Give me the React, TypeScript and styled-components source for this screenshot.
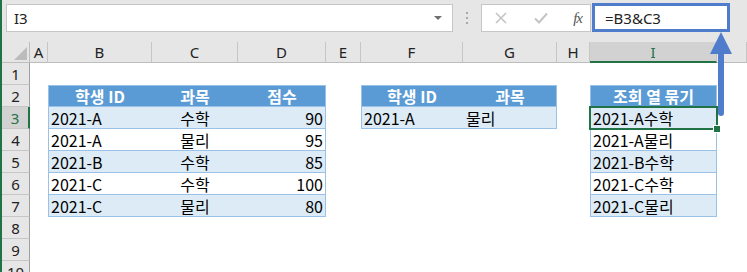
import React from 'react';
import styled, { createGlobalStyle } from 'styled-components';

const GlobalStyle = createGlobalStyle`
  html, body {
    margin: 0;
    padding: 0;
    background: #ffffff;
  }
  body {
    width: 747px;
    height: 272px;
    overflow: hidden;
  }
`;

const GREEN = '#217346';
const BLUE_LINE = '#9bc2e6';
const ACCENT = '#4f7ccb';
const UI_FONT = `"Noto Sans", "Open Sans", sans-serif`;
const CELL_FONT = `"Noto Sans CJK KR", "Noto Sans", sans-serif`;

const Window = styled.div`
  display: flex;
  flex-direction: column;
  width: 747px;
  height: 272px;
  border-left: 2px solid ${GREEN};
  box-sizing: border-box;
  position: relative;
  overflow: hidden;
  background: #ffffff;
`;

const TopBar = styled.div`
  display: flex;
  flex-shrink: 0;
  align-items: flex-start;
  height: 42px;
  padding: 4px 0 0 4px;
  box-sizing: border-box;
  background: #e6e6e6;
  font-family: ${UI_FONT};
`;

const NameBox = styled.div`
  position: relative;
  width: 447px;
  height: 28px;
  box-sizing: border-box;
  background: #ffffff;
  border: 1px solid #c6c6c6;
  display: flex;
  align-items: center;
  padding-left: 7px;
  font-size: 15px;
  color: #222;
`;

const DropArrow = styled.span`
  position: absolute;
  right: 10px;
  top: 11px;
  width: 0;
  height: 0;
  border-left: 4px solid transparent;
  border-right: 4px solid transparent;
  border-top: 4px solid #6f6f6f;
`;

const Grip = styled.div`
  width: 28px;
  height: 28px;
  display: flex;
  flex-direction: column;
  align-items: center;
  justify-content: center;
  gap: 3px;
`;

const GripDot = styled.span`
  width: 2px;
  height: 2px;
  background: #a8a8a8;
`;

const FxGroup = styled.div`
  width: 110px;
  height: 28px;
  box-sizing: border-box;
  background: #ffffff;
  border: 1px solid #c6c6c6;
  display: flex;
  align-items: center;
  justify-content: space-between;
  padding: 0 8px 0 12px;
  margin-right: 1px;
`;

const FxLabel = styled.span`
  font-family: "Liberation Serif", serif;
  font-style: italic;
  font-size: 15px;
  color: #555;
  letter-spacing: -1px;
`;

const FormulaBox = styled.div`
  width: 138px;
  height: 29px;
  margin-top: -1px;
  box-sizing: border-box;
  background: #ffffff;
  border: 3px solid ${ACCENT};
  display: flex;
  align-items: center;
  padding-left: 10px;
  font-size: 15px;
  color: #222;
`;

const Sheet = styled.div`
  display: grid;
  flex-shrink: 0;
  grid-template-columns: 28px 18px 104px 86px 88px 35px 102px 94px 33px 127px 1fr;
  grid-template-rows: 21px repeat(10, 22px);
`;

const Corner = styled.div`
  position: relative;
  background: #e6e6e6;
  border-right: 1px solid #bdbdbd;
  border-bottom: 1px solid #bdbdbd;
  box-sizing: border-box;
  &::after {
    content: '';
    position: absolute;
    right: 2px;
    bottom: 2px;
    width: 0;
    height: 0;
    border-left: 13px solid transparent;
    border-bottom: 13px solid #bcbcbc;
  }
`;

const ColHead = styled.div<{ $active?: boolean }>`
  display: flex;
  align-items: center;
  justify-content: center;
  box-sizing: border-box;
  font-family: ${UI_FONT};
  font-size: 15px;
  background: ${(p) => (p.$active ? '#d2d2d2' : '#e6e6e6')};
  color: ${(p) => (p.$active ? GREEN : '#222')};
  border-right: 1px solid #c6c6c6;
  border-bottom: ${(p) => (p.$active ? `2px solid ${GREEN}` : '1px solid #bdbdbd')};
`;

const RowHead = styled.div<{ $active?: boolean }>`
  display: flex;
  align-items: center;
  justify-content: center;
  box-sizing: border-box;
  font-family: ${UI_FONT};
  font-size: 15px;
  background: ${(p) => (p.$active ? '#d2d2d2' : '#e6e6e6')};
  color: ${(p) => (p.$active ? GREEN : '#222')};
  border-bottom: 1px solid #c6c6c6;
  border-right: ${(p) => (p.$active ? `2px solid ${GREEN}` : '1px solid #9f9f9f')};
`;

type Kind = 'empty' | 'head' | 'band' | 'plain';
type Align = 'left' | 'center' | 'right';

const Cell = styled.div<{ $kind: Kind; $align: Align; $first?: boolean; $last?: boolean }>`
  position: relative;
  display: flex;
  align-items: center;
  justify-content: ${(p) =>
    p.$align === 'left' ? 'flex-start' : p.$align === 'right' ? 'flex-end' : 'center'};
  padding: 0 3px 0 3px;
  box-sizing: border-box;
  font-family: ${CELL_FONT};
  font-size: 16px;
  white-space: nowrap;
  color: ${(p) => (p.$kind === 'head' ? '#ffffff' : '#000000')};
  font-weight: ${(p) => (p.$kind === 'head' ? 700 : 400)};
  background: ${(p) =>
    p.$kind === 'head' ? '#5b9bd5' : p.$kind === 'band' ? '#ddebf7' : '#ffffff'};
  box-shadow: ${(p) => {
    if (p.$kind === 'empty') return 'none';
    const s: string[] = [`inset 0 -1px 0 ${BLUE_LINE}`];
    if (p.$kind === 'head') s.push(`inset 0 1px 0 ${BLUE_LINE}`);
    if (p.$first) s.push(`inset 1px 0 0 ${BLUE_LINE}`);
    if (p.$last) s.push(`inset -1px 0 0 ${BLUE_LINE}`);
    return s.join(', ');
  }};
`;

const Selection = styled.div`
  position: absolute;
  z-index: 3;
  left: -1px;
  top: -1px;
  right: -1px;
  bottom: -1px;
  border: 2px solid ${GREEN};
  pointer-events: none;
`;

const FillHandle = styled.span`
  position: absolute;
  right: -5px;
  bottom: -5px;
  width: 6px;
  height: 6px;
  background: ${GREEN};
  border: 1px solid #ffffff;
`;

const ArrowOverlay = styled.svg`
  position: absolute;
  z-index: 4;
  left: 704px;
  top: 30px;
`;

const COLS = ['A', 'B', 'C', 'D', 'E', 'F', 'G', 'H', 'I', ''];

type CellDef = { text?: string; kind: Kind; align: Align; first?: boolean; last?: boolean };

const empty: CellDef = { kind: 'empty', align: 'left' };

const students = [
  ['2021-A', '수학', '90'],
  ['2021-A', '물리', '95'],
  ['2021-B', '수학', '85'],
  ['2021-C', '수학', '100'],
  ['2021-C', '물리', '80'],
];

const buildRow = (r: number): CellDef[] => {
  const row: CellDef[] = COLS.map(() => empty);
  if (r === 2) {
    row[1] = { text: '학생 ID', kind: 'head', align: 'center', first: true };
    row[2] = { text: '과목', kind: 'head', align: 'center' };
    row[3] = { text: '점수', kind: 'head', align: 'center', last: true };
    row[5] = { text: '학생 ID', kind: 'head', align: 'center', first: true };
    row[6] = { text: '과목', kind: 'head', align: 'center', last: true };
    row[8] = { text: '조회 열 묶기', kind: 'head', align: 'center', first: true, last: true };
  }
  if (r >= 3 && r <= 7) {
    const d = students[r - 3];
    const kind: Kind = r % 2 === 1 ? 'band' : 'plain';
    row[1] = { text: d[0], kind, align: 'left', first: true };
    row[2] = { text: d[1], kind, align: 'center' };
    row[3] = { text: d[2], kind, align: 'right', last: true };
    row[8] = { text: d[0] + d[1], kind, align: 'left', first: true, last: true };
  }
  if (r === 3) {
    row[5] = { text: '2021-A', kind: 'band', align: 'left', first: true };
    row[6] = { text: '물리', kind: 'band', align: 'left', last: true };
  }
  return row;
};

const App = () => {
  const rows = Array.from({ length: 10 }, (_, i) => i + 1);
  return (
    <>
      <GlobalStyle />
      <Window>
        <TopBar>
          <NameBox>
            I3
            <DropArrow />
          </NameBox>
          <Grip>
            <GripDot />
            <GripDot />
            <GripDot />
          </Grip>
          <FxGroup>
            <svg width="14" height="14" viewBox="0 0 14 14">
              <path d="M2 2 L12 12 M12 2 L2 12" stroke="#c4c4c4" strokeWidth="1.6" />
            </svg>
            <svg width="16" height="14" viewBox="0 0 16 14">
              <path d="M2 7.5 L6 11.5 L14 2.5" stroke="#c4c4c4" strokeWidth="2" fill="none" />
            </svg>
            <FxLabel>fx</FxLabel>
          </FxGroup>
          <FormulaBox>=B3&amp;C3</FormulaBox>
        </TopBar>
        <Sheet>
          <Corner />
          {COLS.map((c, i) => (
            <ColHead key={'h' + i} $active={c === 'I'}>
              {c}
            </ColHead>
          ))}
          {rows.map((r) => (
            <React.Fragment key={r}>
              <RowHead $active={r === 3}>{r}</RowHead>
              {buildRow(r).map((cell, ci) => (
                <Cell
                  key={ci}
                  $kind={cell.kind}
                  $align={cell.align}
                  $first={cell.first}
                  $last={cell.last}
                >
                  {cell.text}
                  {r === 3 && ci === 8 && (
                    <Selection>
                      <FillHandle />
                    </Selection>
                  )}
                </Cell>
              ))}
            </React.Fragment>
          ))}
        </Sheet>
        <ArrowOverlay width="30" height="90" viewBox="0 0 30 90">
          <path d="M15 2 L26 24 L4 24 Z" fill={ACCENT} />
          <rect x="12" y="22" width="6" height="64" rx="3" fill={ACCENT} />
        </ArrowOverlay>
      </Window>
    </>
  );
};

export default App;
